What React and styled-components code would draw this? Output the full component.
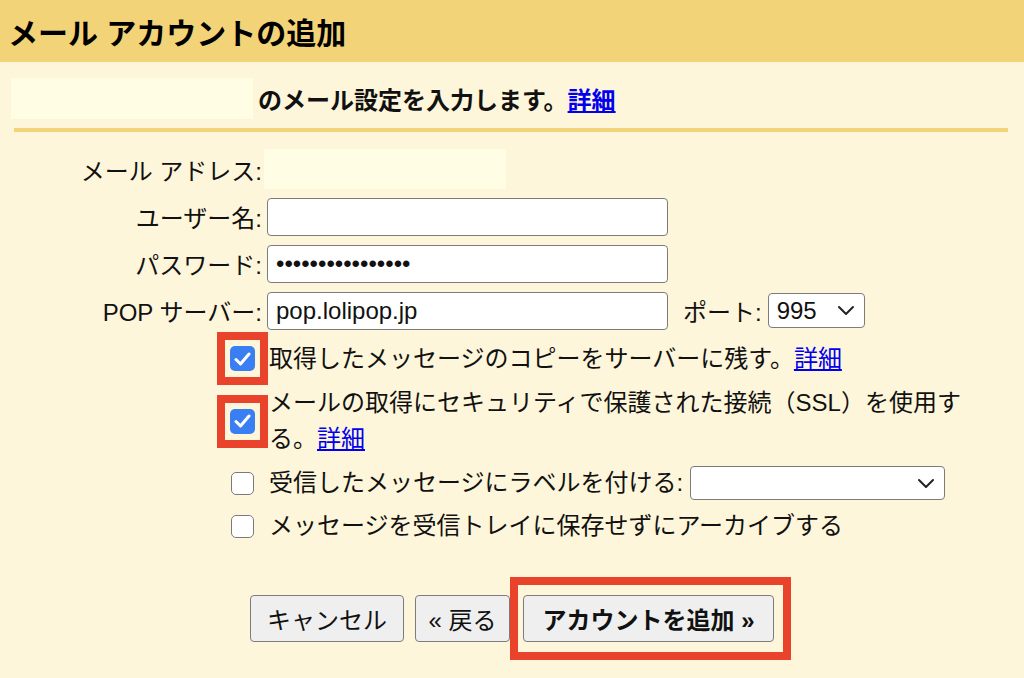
import React from 'react'
import styled, { createGlobalStyle } from 'styled-components'

const GlobalStyle = createGlobalStyle`
  html, body {
    margin: 0;
    background: #fef6da;
  }
  body {
    font-family: "Liberation Sans", "Noto Sans CJK JP", sans-serif;
    color: #111;
  }
`

const Page = styled.div`
  width: 1024px;
  height: 678px;
  overflow: hidden;
  background: #fef6da;
`

const Header = styled.h1`
  margin: 0;
  height: 62px;
  display: flex;
  align-items: center;
  padding-left: 8px;
  background: #f3d377;
  font-size: 30px;
  font-weight: 700;
  color: #000;
`

const Intro = styled.div`
  display: flex;
  align-items: center;
  gap: 5px;
  margin-top: 16px;
  padding-left: 11px;
  font-size: 24px;
  font-weight: 700;
`

const Blank = styled.div`
  width: ${({ $w }) => $w}px;
  height: ${({ $h }) => $h}px;
  margin-left: ${({ $ml }) => $ml || 0}px;
  background: #fffde3;
  flex-shrink: 0;
`

const Link = styled.a`
  color: #0000ee;
  text-decoration: underline;
  font-weight: 400;
  &.strong { font-weight: 700; }
`

const Divider = styled.div`
  height: 4px;
  margin: 9px 16px 0 14px;
  background: #f3d377;
`

const Form = styled.div`
  display: flex;
  flex-direction: column;
  gap: 8px;
  margin-top: 17px;
  font-size: 24px;
`

const FieldRow = styled.div`
  display: flex;
  align-items: center;
  height: ${({ $h }) => $h || 39}px;
`

const FieldLabel = styled.label`
  width: 262px;
  flex-shrink: 0;
  text-align: right;
  &.inline {
    width: auto;
    margin-left: 15px;
  }
`

const TextInput = styled.input`
  margin-left: 5px;
  width: 401px;
  height: 38px;
  box-sizing: border-box;
  border: 1.5px solid #7c7c7c;
  border-radius: 4px;
  padding: 0 8px;
  background: #fff;
  font-family: inherit;
  font-size: 24px;
  color: #111;
  outline: none;
`

const SelectBox = styled.div`
  margin-left: ${({ $ml }) => $ml || 0}px;
  width: ${({ $w }) => $w}px;
  height: ${({ $h }) => $h}px;
  box-sizing: border-box;
  display: flex;
  align-items: center;
  justify-content: space-between;
  padding: 0 9px 0 8px;
  border: 1.5px solid #7c7c7c;
  border-radius: 4px;
  background: #fff;
  font-size: 24px;
  flex-shrink: 0;
`

const Checks = styled.div`
  display: flex;
  flex-direction: column;
  margin-top: 2px;
  font-size: 24px;
`

const CheckRow = styled.div`
  display: flex;
  align-items: center;
  padding-left: 217px;
  margin-top: ${({ $mt }) => $mt || 0}px;
`

const CheckSlot = styled.span`
  width: 51px;
  height: ${({ $mark }) => ($mark ? 53 : 36)}px;
  box-sizing: border-box;
  display: flex;
  align-items: center;
  justify-content: center;
  flex-shrink: 0;
  border: 8px solid ${({ $mark }) => ($mark ? '#e9432b' : 'transparent')};
  border-top-width: ${({ $mark }) => ($mark ? 8 : 0)}px;
  border-bottom-width: ${({ $mark }) => ($mark ? 8 : 0)}px;
`

const Box = styled.span`
  width: ${({ $on }) => ($on ? 25 : 23)}px;
  height: ${({ $on }) => ($on ? 25 : 23)}px;
  box-sizing: border-box;
  border-radius: 5px;
  display: flex;
  align-items: center;
  justify-content: center;
  background: ${({ $on }) => ($on ? '#3a7ef3' : '#fff')};
  border: ${({ $on }) => ($on ? 'none' : '1.5px solid #7a7a7a')};
`

const CheckText = styled.span`
  margin-left: 1px;
  line-height: 36px;
`

const ButtonBar = styled.div`
  display: flex;
  align-items: center;
  padding-left: 250px;
  margin-top: 33px;
`

const Button = styled.button`
  width: ${({ $w }) => $w}px;
  height: 47px;
  margin-right: ${({ $mr }) => $mr || 0}px;
  box-sizing: border-box;
  border: 1.5px solid #7c7c7c;
  border-radius: 4px;
  background: #efefef;
  font-family: inherit;
  font-size: 24px;
  font-weight: ${({ $bold }) => ($bold ? 700 : 400)};
  color: #111;
  padding: 0;
  white-space: nowrap;
`

const Highlight = styled.span`
  display: inline-flex;
  border: 8px solid #e9432b;
  padding: 10px 9px 10px 5px;
`

const Check = () => (
  <svg width="17" height="14" viewBox="0 0 17 14">
    <path d="M2 7.5 L6.5 12 L15 2" fill="none" stroke="#fff" strokeWidth="3" strokeLinecap="round" strokeLinejoin="round" />
  </svg>
)

const Chevron = () => (
  <svg width="18" height="11" viewBox="0 0 18 11">
    <path d="M2 2 L9 9 L16 2" fill="none" stroke="#222" strokeWidth="2" strokeLinecap="round" strokeLinejoin="round" />
  </svg>
)

const CheckItem = ({ on, mark, children, mt }) => (
  <CheckRow $mt={mt}>
    <CheckSlot $mark={mark}>
      <Box $on={on}>{on && <Check />}</Box>
    </CheckSlot>
    <CheckText>{children}</CheckText>
  </CheckRow>
)

export default function App() {
  return (
    <Page>
      <GlobalStyle />
      <Header>メール アカウントの追加</Header>

      <Intro>
        <Blank $w={242} $h={41} />
        <span>
          のメール設定を入力します。<Link className="strong" href="#">詳細</Link>
        </span>
      </Intro>
      <Divider />

      <Form>
        <FieldRow $h={40}>
          <FieldLabel>メール アドレス:</FieldLabel>
          <Blank $w={242} $h={40} $ml={2} />
        </FieldRow>
        <FieldRow>
          <FieldLabel>ユーザー名:</FieldLabel>
          <TextInput type="text" defaultValue="" />
        </FieldRow>
        <FieldRow>
          <FieldLabel>パスワード:</FieldLabel>
          <TextInput type="password" defaultValue="xxxxxxxxxxxxxxxx" />
        </FieldRow>
        <FieldRow>
          <FieldLabel>POP サーバー:</FieldLabel>
          <TextInput type="text" defaultValue="pop.lolipop.jp" />
          <FieldLabel className="inline">ポート:</FieldLabel>
          <SelectBox $ml={6} $w={97} $h={35}>
            <span>995</span>
            <Chevron />
          </SelectBox>
        </FieldRow>
      </Form>

      <Checks>
        <CheckItem on mark>
          取得したメッセージのコピーをサーバーに残す。<Link href="#">詳細</Link>
        </CheckItem>
        <CheckItem on mark>
          メールの取得にセキュリティで保護された接続（SSL）を使用す
          <br />
          る。<Link href="#">詳細</Link>
        </CheckItem>
        <CheckRow $mt={8}>
          <CheckSlot>
            <Box />
          </CheckSlot>
          <CheckText>受信したメッセージにラベルを付ける:</CheckText>
          <SelectBox $ml={7} $w={255} $h={34}>
            <span />
            <Chevron />
          </SelectBox>
        </CheckRow>
        <CheckItem mt={7}>メッセージを受信トレイに保存せずにアーカイブする</CheckItem>
      </Checks>

      <ButtonBar>
        <Button $w={154} $mr={11}>キャンセル</Button>
        <Button $w={95}>« 戻る</Button>
        <Highlight>
          <Button $w={251} $bold>アカウントを追加 »</Button>
        </Highlight>
      </ButtonBar>
    </Page>
  )
}
